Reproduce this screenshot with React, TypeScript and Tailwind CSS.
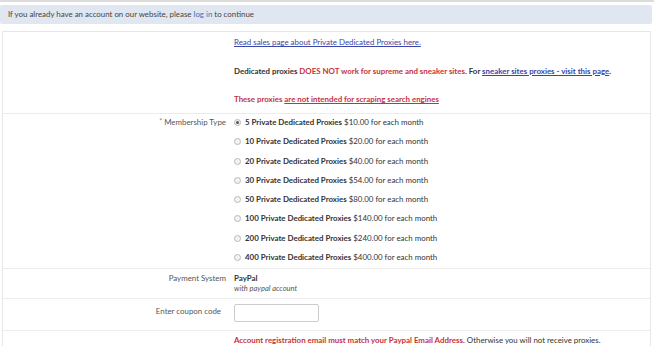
import React from "react";

const plans = [
  { n: 5, price: "$10.00" },
  { n: 10, price: "$20.00" },
  { n: 20, price: "$40.00" },
  { n: 30, price: "$54.00" },
  { n: 50, price: "$80.00" },
  { n: 100, price: "$140.00" },
  { n: 200, price: "$240.00" },
  { n: 400, price: "$400.00" },
];

function Radio({ checked }: { checked?: boolean }) {
  return (
    <span className="w-[7px] h-[7px] rounded-full border border-[#b9b9b9] bg-[#f3f3f3] flex items-center justify-center shrink-0">
      {checked && <span className="w-[3px] h-[3px] rounded-full bg-[#555]" />}
    </span>
  );
}

function Row({ label, children, className = "" }: { label?: React.ReactNode; children: React.ReactNode; className?: string }) {
  return (
    <div className={`grid grid-cols-[224px_1fr] border-t border-[#ececec] first:border-t-0 ${className}`}>
      <div className="text-right text-[#555] pr-[1px]">{label}</div>
      <div className="pl-[7px]">{children}</div>
    </div>
  );
}

export default function App() {
  return (
    <div className="w-[654px] h-[346px] bg-white overflow-hidden font-['Lato','Open_Sans',sans-serif] text-[7.9px] leading-[11px] text-[#333] border-t-2 border-[#dcdcdc]">
      <div className="mt-[3px] mr-[2px] h-[19px] bg-[#e1e7f0] rounded-[2px] flex items-center pl-[8px] text-[#444]">
        <span>
          If you already have an account on our website, please{" "}
          <a className="text-[#3a6fc4]">log in</a> to continue
        </span>
      </div>

      <div className="mt-[7px] ml-[2px] mr-[3px] border border-[#e6e6e6] border-b-0">
        <Row className="h-[81px] pt-[5px]">
          <div className="flex flex-col gap-[17.5px]">
            <a className="text-[#3b44a8] underline">Read sales page about Private Dedicated Proxies here.</a>
            <p className="font-bold">
              Dedicated proxies <span className="text-[#c7323a]">DOES NOT work for supreme and sneaker sites</span>. For{" "}
              <a className="text-[#3b44a8] underline">sneaker sites proxies - visit this page</a>.
            </p>
            <p className="font-bold text-[#c7323a]">
              These proxies <span className="underline">are not intended for scraping search engines</span>
            </p>
          </div>
        </Row>

        <Row
          className="h-[155px] pt-[3px]"
          label={
            <span className="block h-[19.3px] leading-[11px]">
              <span className="text-[7px] text-[#888] relative top-[-1px]">*</span> Membership Type
            </span>
          }
        >
          <div className="flex flex-col">
            {plans.map((p, i) => (
              <label key={p.n} className="flex items-start gap-[4px] h-[19.3px]">
                <span className="mt-[2px]">
                  <Radio checked={i === 0} />
                </span>
                <span>
                  <span className="font-bold">{p.n} Private Dedicated Proxies</span> {p.price} for each month
                </span>
              </label>
            ))}
          </div>
        </Row>

        <Row className="h-[30px] pt-[4px]" label="Payment System">
          <div className="font-bold">PayPal</div>
          <div className="italic text-[#555] text-[7.5px] leading-[9px]">with paypal account</div>
        </Row>

        <Row className="h-[32px] pt-[5px]" label={<span className="block pt-[2px] pr-[5px]">Enter coupon code</span>}>
          <input className="block w-[85px] h-[18px] border border-[#ccc] rounded-[2px] bg-white" />
        </Row>

        <Row className="h-[30px] pt-[4px]">
          <span className="font-bold text-[#c7323a]">Account registration email must match your Paypal Email Address.</span>{" "}
          Otherwise you will not receive proxies.
        </Row>
      </div>
    </div>
  );
}
